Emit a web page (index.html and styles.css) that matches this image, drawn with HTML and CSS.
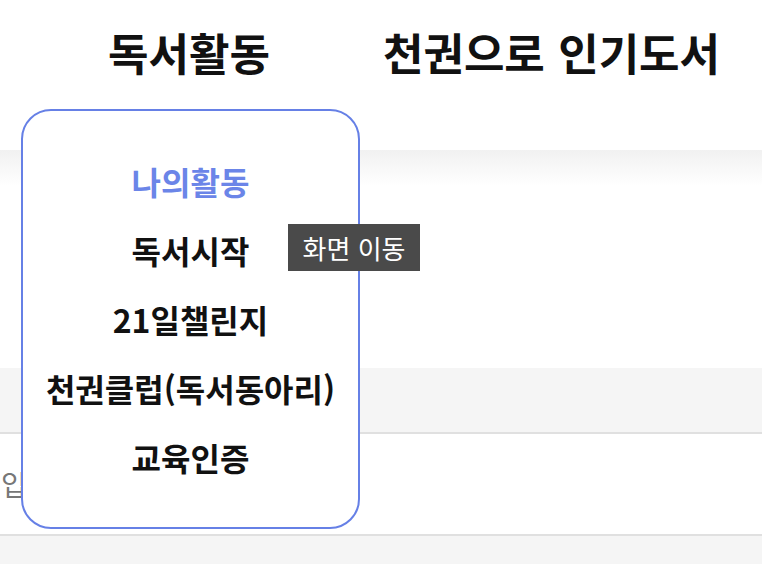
FILE: index.html
```html
<!DOCTYPE html>
<html lang="ko">
<head>
<meta charset="utf-8">
<title>독서활동</title>
<link rel="stylesheet" href="styles.css">
</head>
<body>
<div class="page">
  <header class="gnb">
    <nav class="gnb-nav">
      <a class="gnb-link" href="#">독서활동</a>
      <a class="gnb-link" href="#">천권으로 인기도서</a>
    </nav>
  </header>
  <div class="shade"></div>
  <div class="blank"></div>
  <div class="gray-row"></div>
  <div class="content-row"><span class="row-text">입력하세요</span></div>
  <div class="footer-row"></div>

  <ul class="dropdown">
    <li class="dd-item active">나의활동</li>
    <li class="dd-item">독서시작</li>
    <li class="dd-item">21일챌린지</li>
    <li class="dd-item">천권클럽(독서동아리)</li>
    <li class="dd-item">교육인증</li>
  </ul>
  <div class="tooltip">화면 이동</div>
</div>
</body>
</html>
```
FILE: styles.css
```css
html, body {
  margin: 0;
  padding: 0;
  background: #fff;
}
body {
  font-family: "Noto Sans CJK KR", "Noto Sans", sans-serif;
  overflow: hidden;
}
.page {
  position: relative;
  width: 762px;
  height: 564px;
  overflow: hidden;
}
.gnb {
  height: 150px;
  box-sizing: border-box;
  padding-top: 22px;
}
.gnb-nav {
  display: flex;
  gap: 113px;
  padding-left: 108px;
  white-space: nowrap;
}
.gnb-link {
  font-size: 44px;
  font-weight: 700;
  word-spacing: 1px;
  line-height: 60px;
  color: #111;
  text-decoration: none;
}
.shade {
  height: 36px;
  background: linear-gradient(#f1f1f1, #fff);
}
.blank {
  height: 182px;
}
.gray-row {
  height: 64px;
  background: #f5f5f5;
  border-bottom: 2px solid #e0e0e0;
}
.content-row {
  height: 100px;
  border-bottom: 2px solid #e0e0e0;
  display: flex;
  align-items: center;
  padding-left: 1px;
}
.row-text {
  font-size: 28px;
  color: #777;
  line-height: 30px;
  margin-top: 0;
}
.footer-row {
  height: 40px;
  background: #f5f5f5;
}
.dropdown {
  position: absolute;
  left: 21px;
  top: 109px;
  width: 339px;
  height: 420px;
  box-sizing: border-box;
  margin: 0;
  padding: 36px 0 0;
  list-style: none;
  background: #fff;
  border: 2px solid #6680e6;
  border-radius: 30px;
  z-index: 2;
}
.dd-item {
  font-size: 32px;
  font-weight: 700;
  line-height: 69px;
  text-align: center;
  color: #111;
}
.dd-item.active {
  color: #6b85e8;
}
.tooltip {
  position: absolute;
  left: 288px;
  top: 224px;
  width: 132px;
  height: 47px;
  background: #4a4a4a;
  color: #fff;
  font-size: 26px;
  line-height: 47px;
  text-align: center;
  z-index: 3;
}
```
